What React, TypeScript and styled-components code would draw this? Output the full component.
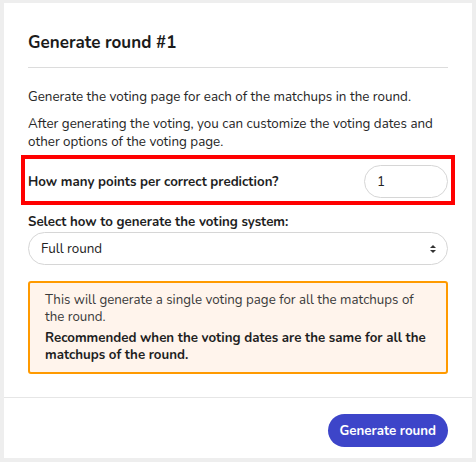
import React from "react";
import styled, { createGlobalStyle } from "styled-components";

const Global = createGlobalStyle`
  html, body { margin: 0; padding: 0; background: #eeeeee; }
  body { font-family: "Nunito", "Lato", "Noto Sans", sans-serif; color: #212529; }
  * { box-sizing: border-box; }
`;

const Page = styled.div`
  padding: 3px 4px 4px 4px;
`;

const Card = styled.div`
  width: 468px;
  height: 455px;
  background: #ffffff;
  display: flex;
  flex-direction: column;
`;

const Header = styled.div`
  margin: 0 24px;
  padding: 28px 0 12px;
  border-bottom: 1px solid #dcdcdc;
`;

const Title = styled.h5`
  margin: 0;
  font-size: 17px;
  line-height: 24px;
  font-weight: 700;
  color: #1b1b1b;
`;

const Body = styled.div`
  padding: 20px 24px 23px;
  flex: 1;
  border-bottom: 1px solid #e6e6e6;
`;

const Para = styled.p<{ $mb?: number }>`
  margin: 0 0 ${(p) => p.$mb ?? 0}px;
  font-size: 13.4px;
  line-height: 18px;
  color: #262626;
`;

const Highlight = styled.div`
  margin: 4px -7px 8px;
  border: 4px solid #ff0000;
  padding: 6px 3px 3px;
  display: flex;
  align-items: center;
  justify-content: space-between;
  height: 50px;
`;

const Label = styled.label`
  font-size: 13.3px;
  line-height: 18px;
  font-weight: 700;
  color: #1e1e1e;
`;

const NumberInput = styled.div`
  width: 84px;
  height: 33px;
  border: 1px solid #d6d6d6;
  border-radius: 17px;
  display: flex;
  align-items: center;
  padding-left: 12px;
  font-size: 13.4px;
  color: #222;
`;

const FieldLabel = styled(Label)`
  display: block;
  margin-bottom: 1px;
`;

const Select = styled.div`
  height: 33px;
  border: 1px solid #d6d6d6;
  border-radius: 17px;
  display: flex;
  align-items: center;
  justify-content: space-between;
  padding: 0 10px 0 12px;
  font-size: 13.4px;
  color: #222;
`;

const Notice = styled.div`
  margin-top: 16px;
  border: 2px solid #ff9a00;
  border-radius: 3px;
  background: #fff4ec;
  padding: 9px 15px 9px;
`;

const NoticeText = styled.p<{ $bold?: boolean }>`
  margin: 0;
  font-size: 13.3px;
  line-height: 16.5px;
  font-weight: ${(p) => (p.$bold ? 700 : 400)};
  color: ${(p) => (p.$bold ? "#1e1e1e" : "#3a3a3a")};
  & + & { margin-top: 5px; }
`;

const Footer = styled.div`
  display: flex;
  justify-content: flex-end;
  padding: 16px 24px 13px;
`;

const Button = styled.button`
  height: 33px;
  padding: 0 12px;
  border: none;
  border-radius: 17px;
  background: #3d45c9;
  color: #fff;
  font-family: inherit;
  font-size: 13.3px;
  font-weight: 700;
`;

const Arrows = () => (
  <svg width="8" height="10" viewBox="0 0 8 10">
    <path d="M4 1 L7 4 L1 4 Z" fill="#333" />
    <path d="M4 9 L7 6 L1 6 Z" fill="#333" />
  </svg>
);

export default function App() {
  return (
    <>
      <Global />
      <Page>
        <Card>
          <Header>
            <Title>Generate round #1</Title>
          </Header>
          <Body>
            <Para $mb={9}>Generate the voting page for each of the matchups in the round.</Para>
            <Para>
              After generating the voting, you can customize the voting dates and other options of the voting page.
            </Para>
            <Highlight>
              <Label>How many points per correct prediction?</Label>
              <NumberInput>1</NumberInput>
            </Highlight>
            <FieldLabel>Select how to generate the voting system:</FieldLabel>
            <Select>
              <span>Full round</span>
              <Arrows />
            </Select>
            <Notice>
              <NoticeText>This will generate a single voting page for all the matchups of the round.</NoticeText>
              <NoticeText $bold>Recommended when the voting dates are the same for all the matchups of the round.</NoticeText>
            </Notice>
          </Body>
          <Footer>
            <Button>Generate round</Button>
          </Footer>
        </Card>
      </Page>
    </>
  );
}
